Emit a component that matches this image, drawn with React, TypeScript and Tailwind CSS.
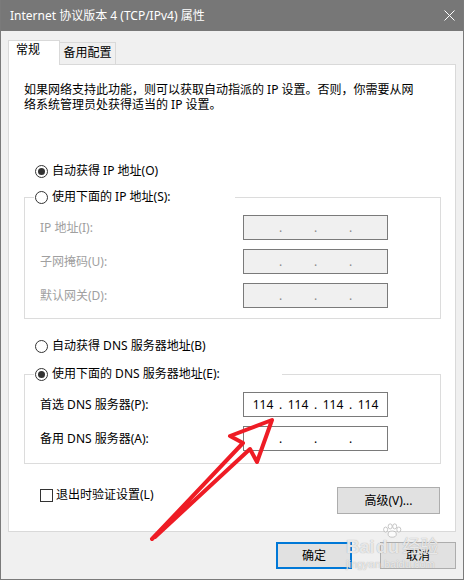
import { Fragment } from "react";

const ui = "font-['Noto_Sans','Noto_Sans_CJK_SC',sans-serif]";

function Radio({ checked }: { checked?: boolean }) {
  return (
    <span className="flex h-[13px] w-[13px] shrink-0 items-center justify-center rounded-full border border-[#333333] bg-white">
      {checked && <span className="h-[7px] w-[7px] rounded-full bg-[#333333]" />}
    </span>
  );
}

function IpBox({ values, disabled }: { values?: string[]; disabled?: boolean }) {
  return (
    <div
      className={`flex h-[25px] w-[145px] shrink-0 items-center border border-[#7a7a7a] pl-[5px] text-[12px] leading-[16px] ${
        disabled ? "bg-[#f0f0f0] text-[#8a8a8a]" : "bg-white text-black"
      }`}
    >
      {[0, 1, 2, 3].map((i) => (
        <Fragment key={i}>
          <span className="w-[28px] text-center">{values ? values[i] : ""}</span>
          {i < 3 && <span className="w-[7px] text-center">.</span>}
        </Fragment>
      ))}
    </div>
  );
}

function FieldRow({ label, disabled, values, first }: { label: string; disabled?: boolean; values?: string[]; first?: boolean }) {
  return (
    <div className={`flex items-center pl-[6px] ${first ? "mt-[10px]" : "mt-[9px]"}`}>
      <span className={`w-[203px] text-[12px] leading-[16px] ${disabled ? "text-[#a0a0a0]" : "text-black"}`}>{label}</span>
      <IpBox values={values} disabled={disabled} />
    </div>
  );
}

function RadioRow({ label, checked }: { label: string; checked?: boolean }) {
  return (
    <div className="flex h-[16px] items-center gap-[4px] pl-px text-[12px] leading-[16px] text-black">
      <Radio checked={checked} />
      <span className="whitespace-nowrap">{label}</span>
    </div>
  );
}

function Button({ children, primary, className }: { children: string; primary?: boolean; className?: string }) {
  return (
    <div
      className={`flex h-[27px] items-center justify-center bg-[#e1e1e1] text-[12px] text-black ${
        primary ? "border-2 border-[#0078d7]" : "border border-[#adadad]"
      } ${className ?? ""}`}
    >
      {children}
    </div>
  );
}

export default function App() {
  return (
    <div className={`relative h-[581px] w-[465px] bg-white ${ui}`}>
      <div className="flex h-[580px] w-[464px] flex-col border-x border-b border-[#7a7a7a] bg-[#f0f0f0]">
        {/* title bar */}
        <div className="flex h-[31px] shrink-0 items-center justify-between bg-[#777777] pl-[9px] pr-[8px]">
          <span className="text-[12px] leading-[16px] text-white">Internet 协议版本 4 (TCP/IPv4) 属性</span>
          <svg width="11" height="11" viewBox="0 0 11 11" className="mt-[-1px]">
            <path d="M0.5 0.5 L10.5 10.5 M10.5 0.5 L0.5 10.5" stroke="white" strokeWidth="1" />
          </svg>
        </div>

        <div className="flex flex-col pl-[7px] pr-[7px] pt-[9px]">
          {/* tabs */}
          <div className="flex h-[24px] items-end">
            <div className="relative z-10 -mb-px h-[25px] w-[52px] border-x border-t border-[#d9d9d9] bg-white pl-[7px] pt-px text-[12px] leading-[16px] text-black">
              常规
            </div>
            <div className="h-[22px] w-[56px] border-r border-t border-[#d9d9d9] bg-[#f0f0f0] pt-[2px] text-center text-[12px] leading-[16px] text-black">
              备用配置
            </div>
          </div>

          {/* panel */}
          <div className="flex h-[468px] w-[448px] flex-col border border-[#d9d9d9] bg-white pl-[15px] pr-[14px]">
            <div className="mt-[17px] text-[12px] leading-[15px] text-black">
              <div>如果网络支持此功能，则可以获取自动指派的 IP 设置。否则，你需要从网</div>
              <div>络系统管理员处获得适当的 IP 设置。</div>
            </div>

            <div className="ml-[10px] mt-[51px]">
              <RadioRow label="自动获得 IP 地址(O)" checked />
            </div>

            <fieldset className="mt-[10px] border border-[#dcdcdc] px-[9px] pb-[10px]">
              <legend className="w-[201px]">
                <RadioRow label="使用下面的 IP 地址(S):" />
              </legend>
              <FieldRow label="IP 地址(I):" disabled first />
              <FieldRow label="子网掩码(U):" disabled />
              <FieldRow label="默认网关(D):" disabled />
            </fieldset>

            <div className="ml-[10px] mt-[19px]">
              <RadioRow label="自动获得 DNS 服务器地址(B)" />
            </div>

            <fieldset className="mt-[12px] border border-[#dcdcdc] px-[9px] pb-[12px]">
              <legend className="w-[248px]">
                <RadioRow label="使用下面的 DNS 服务器地址(E):" checked />
              </legend>
              <FieldRow label="首选 DNS 服务器(P):" values={["114", "114", "114", "114"]} first />
              <FieldRow label="备用 DNS 服务器(A):" values={["", "", "", ""]} />
            </fieldset>

            <div className="mt-[23px] flex items-start justify-between pr-px">
              <div className="ml-[16px] flex h-[16px] items-center gap-[3px] text-[12px] leading-[16px] text-black">
                <span className="h-[13px] w-[13px] border border-[#333333] bg-white" />
                <span>退出时验证设置(L)</span>
              </div>
              <Button className="w-[103px]">高级(V)...</Button>
            </div>
          </div>

          {/* dialog buttons */}
          <div className="mt-[10px] flex justify-end gap-[28px]">
            <Button primary className="w-[76px]">确定</Button>
            <Button className="w-[76px]">取消</Button>
          </div>
        </div>
      </div>

      {/* watermark */}
      <div className="pointer-events-none absolute left-[346px] top-[538px] flex flex-col items-start">
        <div className="flex items-end font-['Liberation_Sans','Noto_Sans_CJK_SC',sans-serif] text-[19px] font-bold leading-[18px] text-white/75 [text-shadow:0_0_1px_#9a9a9a]">
          <span className="tracking-[-0.5px]">Bai</span>
          <span className="relative ml-[2px]">
            <svg width="20" height="15" viewBox="0 0 22 16" className="absolute -top-[15px] left-[6px]">
              <g fill="white" fillOpacity="0.75" stroke="#a8a8a8" strokeWidth="0.7">
                <ellipse cx="4" cy="7" rx="2.2" ry="2.8" />
                <ellipse cx="9" cy="3.5" rx="2.2" ry="2.8" />
                <ellipse cx="14" cy="3.5" rx="2.2" ry="2.8" />
                <ellipse cx="18.5" cy="7" rx="2.2" ry="2.8" />
                <ellipse cx="11.2" cy="12" rx="4.5" ry="3.4" />
              </g>
            </svg>
            du
          </span>
          <span className="ml-[3px] text-[18px] font-normal">经验</span>
        </div>
        <div className="mt-[3px] font-['Liberation_Sans',sans-serif] text-[11px] leading-[11px] text-white/75 [text-shadow:0_0_1px_#9a9a9a]">
          jingyan.baidu.com
        </div>
      </div>

      {/* red annotation arrow */}
      <svg className="pointer-events-none absolute left-0 top-0" width="465" height="581" viewBox="0 0 465 581">
        <polyline
          points="152,539 243,443 230,436 272,420 257,462 250,449 155,537"
          fill="none"
          stroke="#ee1c25"
          strokeWidth="4"
          strokeLinejoin="round"
          strokeLinecap="round"
        />
      </svg>
    </div>
  );
}
